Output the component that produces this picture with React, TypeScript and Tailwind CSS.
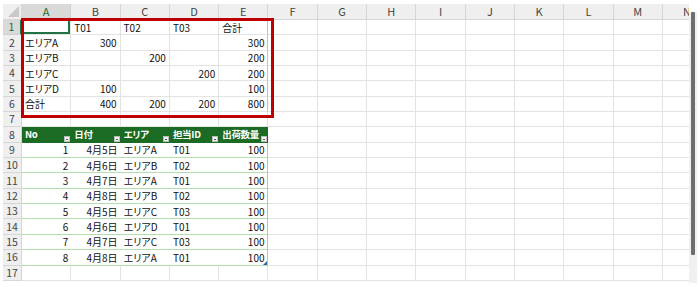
import React from "react";

type Cell = string | number | null;

const COLS = ["A", "B", "C", "D", "E", "F", "G", "H", "I", "J", "K", "L", "M", "N"];

const summary: Cell[][] = [
  [null, "T01", "T02", "T03", "合計"],
  ["エリアA", 300, null, null, 300],
  ["エリアB", null, 200, null, 200],
  ["エリアC", null, null, 200, 200],
  ["エリアD", 100, null, null, 100],
  ["合計", 400, 200, 200, 800],
];

const tableHead = ["No", "日付", "エリア", "担当ID", "出荷数量"];

const tableRows: Cell[][] = [
  [1, "4月5日", "エリアA", "T01", 100],
  [2, "4月6日", "エリアB", "T02", 100],
  [3, "4月7日", "エリアA", "T01", 100],
  [4, "4月8日", "エリアB", "T02", 100],
  [5, "4月5日", "エリアC", "T03", 100],
  [6, "4月6日", "エリアD", "T01", 100],
  [7, "4月7日", "エリアC", "T03", 100],
  [8, "4月8日", "エリアA", "T01", 100],
];

// numbers and dates sit on the right, like Excel
function isRight(v: Cell) {
  return typeof v === "number" || (typeof v === "string" && /月/.test(v));
}

function RowHeader({ n, active }: { n: number; active?: boolean }) {
  return (
    <div
      className={
        "flex items-center justify-center border-b text-[10.5px] " +
        (active
          ? "bg-[#d9d9d9] border-b-[#d0d0d0] border-r-2 border-r-[#217346] text-[#1e6b2c]"
          : "bg-[#efefef] border-r border-[#d6d6d6] text-[#444]")
      }
    >
      {n}
    </div>
  );
}

function FilterButton() {
  return (
    <div className="absolute right-[1px] bottom-[1px] flex h-[6px] w-[6px] items-end justify-center border border-[#bcbcbc] bg-[#f4f4f4]">
      <div className="mb-[1px] h-[1px] w-[2px] bg-[#555]" />
    </div>
  );
}

function GridCell({ value, className = "", children }: { value: Cell; className?: string; children?: React.ReactNode }) {
  return (
    <div
      className={
        "relative flex items-center overflow-hidden whitespace-nowrap px-[3px] " +
        (isRight(value) ? "justify-end " : "justify-start ") +
        className
      }
    >
      {value}
      {children}
    </div>
  );
}

export default function App() {
  const cells: React.ReactNode[] = [];

  cells.push(
    <div key="corner" className="relative border-b border-r border-[#d6d6d6] bg-[#efefef]">
      <svg className="absolute right-[2px] bottom-[2px]" width="11" height="11" viewBox="0 0 11 11">
        <polygon points="11,0 11,11 0,11" fill="#c8c8c8" />
      </svg>
    </div>
  );
  COLS.forEach((c, i) =>
    cells.push(
      <div
        key={"h" + c}
        className={
          "flex items-center justify-center border-r text-[11px] " +
          (i === 0
            ? "border-b-2 border-b-[#217346] border-r-[#d0d0d0] bg-[#d9d9d9] text-[#1e6b2c]"
            : "border-b border-[#d6d6d6] bg-[#efefef] text-[#444]")
        }
      >
        {c}
      </div>
    )
  );

  for (let r = 1; r <= 17; r++) {
    cells.push(<RowHeader key={"r" + r} n={r} active={r === 1} />);
    for (let c = 0; c < COLS.length; c++) {
      const key = r + "-" + c;

      if (r <= 6 && c < 5) {
        let cls = "text-[10px] bg-white text-[#111] border-b border-b-[#e3e3e3] border-r ";
        cls += c === 4 ? "border-r-[#b7bedf]" : "border-r-[#e3e3e3]";
        if (r === 1 && c === 0) cls += " shadow-[inset_-2px_-2px_0_#217346]";
        cells.push(<GridCell key={key} value={summary[r - 1][c]} className={cls} />);
      } else if (r === 8 && c < 5) {
        cells.push(
          <GridCell
            key={key}
            value={tableHead[c]}
            className="bg-[#1b6b24] pb-[1px] text-[9.5px] font-bold tracking-[-0.3px] text-white"
          >
            <FilterButton />
          </GridCell>
        );
      } else if (r >= 9 && r <= 16 && c < 5) {
        const cls =
          "text-[10px] bg-white text-[#111] border-b border-b-[#b3deae]" +
          (c === 4 ? " border-r border-r-[#9fd49a]" : "");
        cells.push(
          <GridCell key={key} value={tableRows[r - 9][c]} className={cls}>
            {r === 16 && c === 4 && (
              <svg className="absolute right-0 bottom-0" width="4" height="4" viewBox="0 0 4 4">
                <polygon points="4,0 4,4 0,4" fill="#2f5fb3" />
              </svg>
            )}
          </GridCell>
        );
      } else {
        cells.push(<div key={key} className="border-b border-r border-[#e3e3e3] bg-white" />);
      }
    }
  }

  return (
    <div className="relative h-[287px] w-[700px] overflow-hidden bg-white font-['Noto_Sans_CJK_JP','Noto_Sans',sans-serif] [font-feature-settings:'palt']">
      <div className="flex pl-[3px] pt-[4px]">
        <div className="w-[686px] overflow-hidden">
          <div className="grid w-max grid-cols-[19px_repeat(14,49.3px)] grid-rows-[16px_repeat(17,15.35px)]">
            {cells}
          </div>
        </div>

        {/* vertical scrollbar */}
        <div className="mt-[8px] h-[271px] w-[8px] bg-[#f0f0f0] px-[2px]">
          <div className="h-[243px] w-[4px] rounded-[1px] bg-[#6e6e6e]" />
        </div>
      </div>

      {/* red highlight around the summary range */}
      <div className="pointer-events-none absolute left-[21px] top-[18px] h-[100px] w-[253px] border-[3px] border-[#c00000]" />
    </div>
  );
}
